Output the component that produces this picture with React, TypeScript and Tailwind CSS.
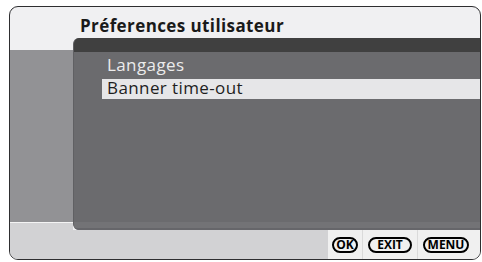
export default function App() {
  const font = { fontFamily: '"Open Sans", "Noto Sans", sans-serif' }
  return (
    <div className="w-[482px] h-[262px] bg-white pt-[6px] pl-[9px]" style={font}>
      <div className="w-[472px] h-[254px] border border-[#2e2e30] rounded-[9px] overflow-hidden flex flex-col bg-[#f0f0f2]">
        {/* title */}
        <div className="h-[31px] shrink-0 pl-[70px] pt-[9px]">
          <h1 className="text-[17px] leading-[20px] font-bold tracking-[0.4px] text-[#1a1a1a]">Préferences utilisateur</h1>
        </div>

        <div className="flex flex-1">
          {/* left strip */}
          <div className="w-[63px] flex flex-col">
            <div className="h-[12px] bg-[#f0f0f2]" />
            <div className="h-[172px] bg-[#929295]" />
            <div className="h-[1px] bg-[#f4f4f4]" />
            <div className="flex-1 bg-[#d2d2d4]" />
          </div>

          {/* panel + footer */}
          <div className="flex-1 flex flex-col">
            <div className="h-[192px] bg-[#6b6b6e] rounded-l-[6px] overflow-hidden flex flex-col border-l border-[#606063]">
              <div className="h-[14px] bg-[#404040]" />
              <ul className="pt-[4px] pl-[28px] text-[17px] leading-[18px] tracking-[0.4px]">
                <li className="pl-[5px] h-[23px] text-[#ececec]">Langages</li>
                <li className="pl-[5px] h-[20px] bg-[#e6e6e8] text-[#1e1e1e]">Banner time-out</li>
              </ul>
              <div className="flex-1" />
              <div className="h-[6px] bg-[#737376]" />
              <div className="h-[2px] bg-[#66666a]" />
            </div>

            <div className="flex-1 flex">
              <div className="flex-1 bg-[#d2d2d4]" />
              <div className="flex bg-[#f0f0f0] items-center text-[12px] leading-none font-bold text-black">
                <div className="w-[35px] h-full flex items-center justify-center border-r border-[#dadada]">
                  <span className="w-[26px] h-[16px] border-2 border-black rounded-full flex items-center justify-center">OK</span>
                </div>
                <div className="w-[55px] h-full flex items-center justify-center border-r border-[#dadada]">
                  <span className="w-[44px] h-[16px] border-2 border-black rounded-full flex items-center justify-center">EXIT</span>
                </div>
                <div className="w-[62px] h-full flex items-center justify-start pl-[5px]">
                  <span className="w-[46px] h-[16px] border-2 border-black rounded-full flex items-center justify-center">MENU</span>
                </div>
              </div>
            </div>
          </div>
        </div>
      </div>
    </div>
  )
}
